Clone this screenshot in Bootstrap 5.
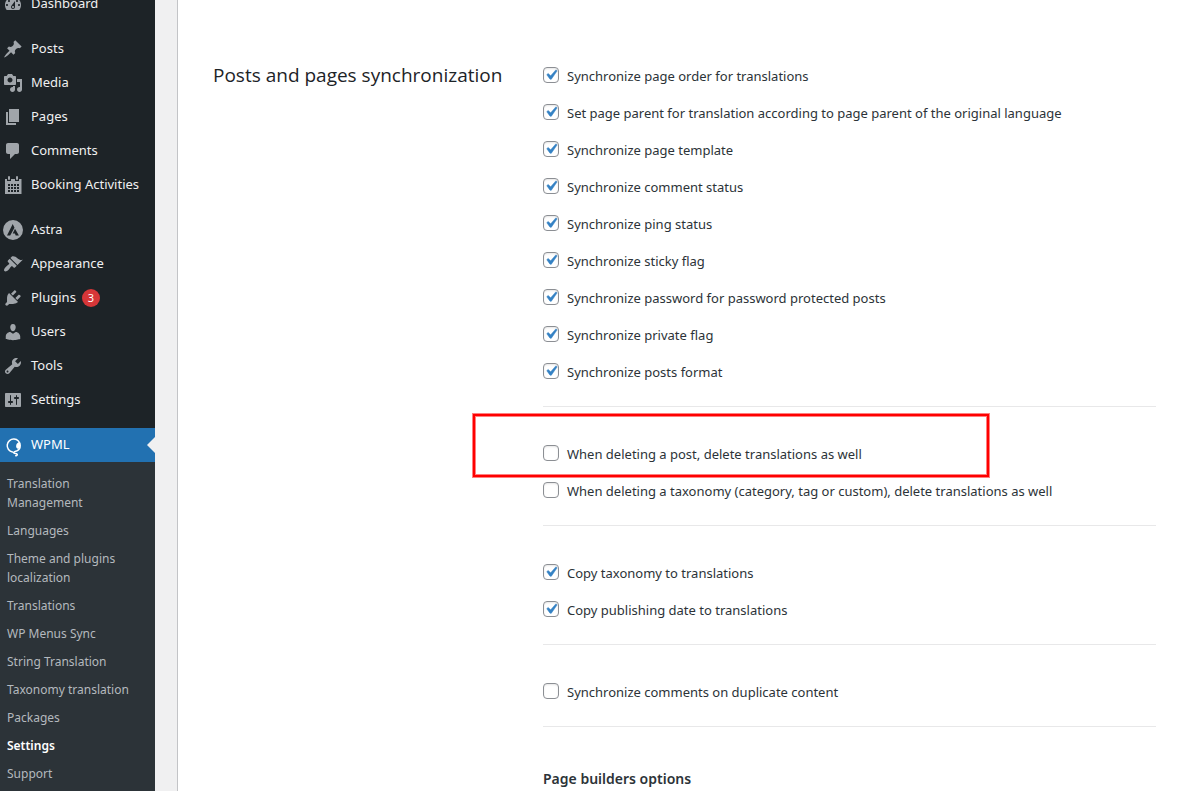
<!DOCTYPE html>
<html lang="en">
<head>
<meta charset="utf-8">
<meta name="viewport" content="width=device-width, initial-scale=1">
<title>WPML Settings</title>
<link href="https://cdn.jsdelivr.net/npm/bootstrap@5.3.0/dist/css/bootstrap.min.css" rel="stylesheet">
<style>
body{font-family:"Noto Sans","Open Sans",sans-serif;font-size:13px;color:#2c3338;background:#f0f0f1}
.admin-side{width:155px;background:#1d2327}
.admin-menu{margin-top:-13px}
.menu-link{height:34px;padding-left:3px;gap:8px;color:#f0f0f1;font-size:13px;text-decoration:none;position:relative}
.menu-link svg{width:20px;height:20px;fill:#a0a5aa;flex:none;overflow:visible}
.menu-gap{margin-top:11px}
.menu-link.current{background:#2271b1;color:#fff}
.menu-link.current::after{content:"";position:absolute;right:0;top:9px;border:8px solid transparent;border-right-color:#f0f0f1;border-left:0}
.count{background:#d63638;color:#fff;width:18px;height:18px;font-size:11px;line-height:18px;margin-left:-2px}
.submenu{background:#2c3338;padding:7px 0}
.submenu a{display:block;padding:5px 20px 4px 7px;font-size:12px;line-height:19px;color:#b4b9be;text-decoration:none}
.submenu a.active{color:#fff;font-weight:600}
.panel{margin-left:22px;background:#fff;border-left:1px solid #c3c4c7;padding:56px 35px 0}
.section-title{width:330px;font-family:"Open Sans","Noto Sans",sans-serif;font-size:19px;line-height:38px;color:#1d2327;font-weight:400}
.opts{padding-bottom:17px;margin-bottom:27px;border-bottom:1px solid #e8e8e9}
.opt{height:37px;gap:8px}
.opt input{appearance:none;width:16px;height:16px;margin:0;border:1px solid #8c8f94;border-radius:4px;background:#fff;box-shadow:inset 0 1px 2px rgba(0,0,0,.1);flex:none}
.opt input:checked{background:#fff url("data:image/svg+xml,%3Csvg xmlns='http://www.w3.org/2000/svg' viewBox='0 0 20 20'%3E%3Cpath d='M14.83 4.89l1.34.94-5.81 8.38H9.02L5.78 9.67l1.34-1.25 2.57 2.4z' fill='%233582c4' stroke='%233582c4' stroke-width='.5'/%3E%3C/svg%3E") center/20px no-repeat}
.opt label{line-height:20px;padding-top:2px}
.marker{left:-70px;top:-20px;width:516px;height:63px;border:2px solid #f00;box-shadow:0 0 0 1px rgba(255,0,0,.5),inset 0 0 0 1px rgba(255,0,0,.5);pointer-events:none}
.sub-title{font-size:14px;line-height:20px;font-weight:600;padding-top:15px}
</style>
</head>
<body>
<div class="d-flex min-vh-100">
<aside class="admin-side flex-shrink-0">
<nav class="admin-menu" aria-label="Main menu">
<a class="menu-link d-flex align-items-center" href="#"><svg viewBox="0 0 20 20"><path d="M3.76 16h12.48c1.1-1.37 1.76-3.11 1.76-5 0-4.42-3.58-8-8-8s-8 3.58-8 8c0 1.89.66 3.63 1.76 5zM10 4c.55 0 1 .45 1 1s-.45 1-1 1-1-.45-1-1 .45-1 1-1zM6 6c.55 0 1 .45 1 1s-.45 1-1 1-1-.45-1-1 .45-1 1-1zm8 0c.55 0 1 .45 1 1s-.45 1-1 1-1-.45-1-1 .45-1 1-1zm-5.37 5.55L12 7v6c0 1.1-.9 2-2 2s-2-.9-2-2c0-.57.24-1.08.63-1.45zM4 10c.55 0 1 .45 1 1s-.45 1-1 1-1-.45-1-1 .45-1 1-1zm12 0c.55 0 1 .45 1 1s-.45 1-1 1-1-.45-1-1 .45-1 1-1zm-5 3c0-.55-.45-1-1-1s-1 .45-1 1 .45 1 1 1 1-.45 1-1z"/></svg>Dashboard</a>
<a class="menu-link menu-gap d-flex align-items-center" href="#"><svg viewBox="0 0 20 20"><path d="M10.44 3.02l1.82-1.82 6.36 6.35-1.83 1.82c-1.05-.68-2.48-.57-3.41.36l-.75.75c-.92.93-1.04 2.35-.35 3.41l-1.83 1.82-2.41-2.41-2.8 2.79c-.42.42-3.38 2.71-3.8 2.29s1.86-3.39 2.28-3.81l2.79-2.79L4.1 9.36l1.83-1.82c1.05.69 2.48.57 3.4-.36l.75-.75c.93-.92 1.05-2.35.36-3.41z"/></svg>Posts</a>
<a class="menu-link d-flex align-items-center" href="#"><svg viewBox="0 0 20 20"><path d="M13 11V4c0-.55-.45-1-1-1h-1.67L9 1H5L3.67 3H2c-.55 0-1 .45-1 1v7c0 .55.45 1 1 1h10c.55 0 1-.45 1-1zM7 4.5c1.38 0 2.5 1.12 2.5 2.5S8.38 9.5 7 9.5 4.5 8.38 4.5 7 5.62 4.5 7 4.5zM14 6h5v10.5c0 1.38-1.12 2.5-2.5 2.5S14 17.88 14 16.5s1.12-2.5 2.5-2.5c.17 0 .34.02.5.05V9h-3V6zm-4 8.05V13h2v3.5c0 1.38-1.12 2.5-2.5 2.5S7 17.88 7 16.5 8.12 14 9.5 14c.17 0 .34.02.5.05z"/></svg>Media</a>
<a class="menu-link d-flex align-items-center" href="#"><svg viewBox="0 0 20 20"><path d="M6 15V2h10v13H6zm-1 1h8v2H3V5h2v11z"/></svg>Pages</a>
<a class="menu-link d-flex align-items-center" href="#"><svg viewBox="0 0 20 20"><path d="M5 2h9c1.100 0 2 .9 2 2v7c0 1.100-.9 2-2 2h-2l-5 5v-5H5c-1.100 0-2-.9-2-2V4c0-1.100.9-2 2-2z"/></svg>Comments</a>
<a class="menu-link d-flex align-items-center" href="#"><svg viewBox="0 0 20 20"><path fill-rule="evenodd" d="M2 4h2v2h4V4h4v2h4V4h2.500v15H2zM5 9h2v2H5zm3 0h2v2H8zm3 0h2v2h-2zm3 0h2v2h-2zM5 12h2v2H5zm3 0h2v2H8zm3 0h2v2h-2zm3 0h2v2h-2zM5 15h2v2H5zm3 0h2v2H8zm3 0h2v2h-2zm3 0h2v2h-2z"/><rect x="5" y="1" width="2" height="4" rx="1"/><rect x="13" y="1" width="2" height="4" rx="1"/></svg>Booking Activities</a>
<a class="menu-link menu-gap d-flex align-items-center" href="#"><svg viewBox="0 0 20 20"><path fill-rule="evenodd" d="M10 0a10 10 0 1 0 0 20 10 10 0 0 0 0-20zM9.700 4l1.800 3.700L7.200 15.500H4zM12 8.800l3.900 6.700h-3.200l-.8-1.900H9.700z"/></svg>Astra</a>
<a class="menu-link d-flex align-items-center" href="#"><svg viewBox="0 0 20 20"><path d="M14.480 11.060L7.410 3.990l1.500-1.500c.5-.56 2.300-.47 3.510.32 1.210.8 1.430 1.280 2.910 2.100 1.180.64 2.450 1.260 4.450.85zm-.71.71L6.700 4.700 4.930 6.470c-.39.39-.39 1.020 0 1.410l1.060 1.060c.39.39.39 1.030 0 1.420-.6.6-1.430 1.110-2.210 1.690-.35.26-.7.53-1.010.84C1.430 14.230.4 16.080 1.400 17.070c.99 1 2.840-.03 4.180-1.360.31-.31.58-.66.85-1.020.57-.78 1.080-1.610 1.690-2.210.39-.39 1.020-.39 1.410 0l1.060 1.060c.39.39 1.020.39 1.410 0z"/></svg>Appearance</a>
<a class="menu-link d-flex align-items-center" href="#"><svg viewBox="0 0 20 20"><path d="M13.110 4.360L9.870 7.600 8 5.730l3.240-3.240c.35-.34 1.050-.2 1.560.32.52.51.66 1.210.31 1.550zm-8 1.770l.91-1.120 9.010 9.010-1.190.84c-.71.71-2.630 1.160-3.820 1.160H6.140L4.900 17.260c-.59.59-1.540.59-2.120 0-.59-.58-.59-1.530 0-2.120l1.240-1.240v-3.880c0-1.130.4-3.190 1.090-3.890zm7.260 3.970l3.240-3.240c.34-.35 1.040-.21 1.550.31.52.51.66 1.210.31 1.550l-3.240 3.250z"/></svg>Plugins <span class="count rounded-circle text-center">3</span></a>
<a class="menu-link d-flex align-items-center" href="#"><svg viewBox="0 0 20 20"><path d="M10 9.250c-2.270 0-2.730-3.440-2.730-3.440C7 4.020 7.820 2 9.970 2c2.160 0 2.980 2.020 2.710 3.810 0 0-.41 3.440-2.680 3.440zm0 2.570L12.720 10c2.390 0 4.520 2.330 4.520 4.530v2.490s-3.650 1.130-7.240 1.130c-3.650 0-7.240-1.130-7.240-1.130v-2.490c0-2.250 1.940-4.480 4.470-4.480z"/></svg>Users</a>
<a class="menu-link d-flex align-items-center" href="#"><svg viewBox="0 0 20 20"><path d="M16.680 9.770c-1.340 1.340-3.300 1.670-4.950.99l-5.410 6.520c-.99.99-2.590.99-3.580 0s-.99-2.590 0-3.570l6.520-5.420c-.68-1.650-.35-3.610.99-4.950 1.280-1.280 3.120-1.620 4.720-1.060l-2.890 2.890 2.820 2.820 2.860-2.870c.53 1.580.18 3.390-1.080 4.650zM3.810 16.210c.4.39 1.040.39 1.430 0 .4-.4.4-1.040 0-1.430-.39-.4-1.030-.4-1.430 0-.39.39-.39 1.030 0 1.430z"/></svg>Tools</a>
<a class="menu-link d-flex align-items-center" href="#"><svg viewBox="0 0 20 20"><path d="M18 16V4c0-.55-.45-1-1-1H3c-.55 0-1 .45-1 1v12c0 .55.45 1 1 1h14c.55 0 1-.45 1-1zM8 11h1c.55 0 1 .45 1 1s-.45 1-1 1H8v1.500c0 .28-.22.5-.5.5s-.5-.22-.5-.5V13H6c-.55 0-1-.45-1-1s.45-1 1-1h1V5.500c0-.28.22-.5.5-.5s.5.22.5.5V11zm5-2h-1c-.55 0-1-.45-1-1s.45-1 1-1h1V5.500c0-.28.22-.5.5-.5s.5.22.5.5V7h1c.55 0 1 .45 1 1s-.45 1-1 1h-1v5.500c0 .28-.22.5-.5.5s-.5-.22-.5-.5V9z"/></svg>Settings</a>
<a class="menu-link menu-gap current d-flex align-items-center" href="#"><svg viewBox="0 0 20 20"><path d="M9.500 17A6.500 6.500 0 1 1 17.200 10.500c0 3-1.500 4.600-3.100 5.200-1.200.4-3.400.8-3.400 2 0 1.300 2.600.5 3.400 1.500.5.800-.2 1.700-1.400 1.500" style="fill:none;stroke:#fff;stroke-width:1.500;stroke-linecap:round"/><path d="M17 7c-2.500 0-4.300 2.500-3.800 5 .4 1.900 2.400 2.400 3.800 1z" style="fill:#fff"/></svg>WPML</a>
<div class="submenu">
<a href="#">Translation Management</a>
<a href="#">Languages</a>
<a href="#">Theme and plugins localization</a>
<a href="#">Translations</a>
<a href="#">WP Menus Sync</a>
<a href="#">String Translation</a>
<a href="#">Taxonomy translation</a>
<a href="#">Packages</a>
<a href="#" class="active">Settings</a>
<a href="#">Support</a>
</div>
</nav>
</aside>
<main class="panel flex-grow-1">
<section class="d-flex">
<h2 class="section-title flex-shrink-0 mb-0">Posts and pages synchronization</h2>
<form class="flex-grow-1">
<div class="opts">
<div class="opt d-flex align-items-center"><input type="checkbox" id="o1" checked><label for="o1">Synchronize page order for translations</label></div>
<div class="opt d-flex align-items-center"><input type="checkbox" id="o2" checked><label for="o2">Set page parent for translation according to page parent of the original language</label></div>
<div class="opt d-flex align-items-center"><input type="checkbox" id="o3" checked><label for="o3">Synchronize page template</label></div>
<div class="opt d-flex align-items-center"><input type="checkbox" id="o4" checked><label for="o4">Synchronize comment status</label></div>
<div class="opt d-flex align-items-center"><input type="checkbox" id="o5" checked><label for="o5">Synchronize ping status</label></div>
<div class="opt d-flex align-items-center"><input type="checkbox" id="o6" checked><label for="o6">Synchronize sticky flag</label></div>
<div class="opt d-flex align-items-center"><input type="checkbox" id="o7" checked><label for="o7">Synchronize password for password protected posts</label></div>
<div class="opt d-flex align-items-center"><input type="checkbox" id="o8" checked><label for="o8">Synchronize private flag</label></div>
<div class="opt d-flex align-items-center"><input type="checkbox" id="o9" checked><label for="o9">Synchronize posts format</label></div>
</div>
<div class="opts">
<div class="opt d-flex align-items-center position-relative"><input type="checkbox" id="o10"><label for="o10">When deleting a post, delete translations as well</label><span class="marker position-absolute"></span></div>
<div class="opt d-flex align-items-center"><input type="checkbox" id="o11"><label for="o11">When deleting a taxonomy (category, tag or custom), delete translations as well</label></div>
</div>
<div class="opts">
<div class="opt d-flex align-items-center"><input type="checkbox" id="o12" checked><label for="o12">Copy taxonomy to translations</label></div>
<div class="opt d-flex align-items-center"><input type="checkbox" id="o13" checked><label for="o13">Copy publishing date to translations</label></div>
</div>
<div class="opts">
<div class="opt d-flex align-items-center"><input type="checkbox" id="o14"><label for="o14">Synchronize comments on duplicate content</label></div>
</div>
<h3 class="sub-title mb-0">Page builders options</h3>
</form>
</section>
</main>
</div>
<script src="https://cdn.jsdelivr.net/npm/bootstrap@5.3.0/dist/js/bootstrap.bundle.min.js"></script>
</body>
</html>
